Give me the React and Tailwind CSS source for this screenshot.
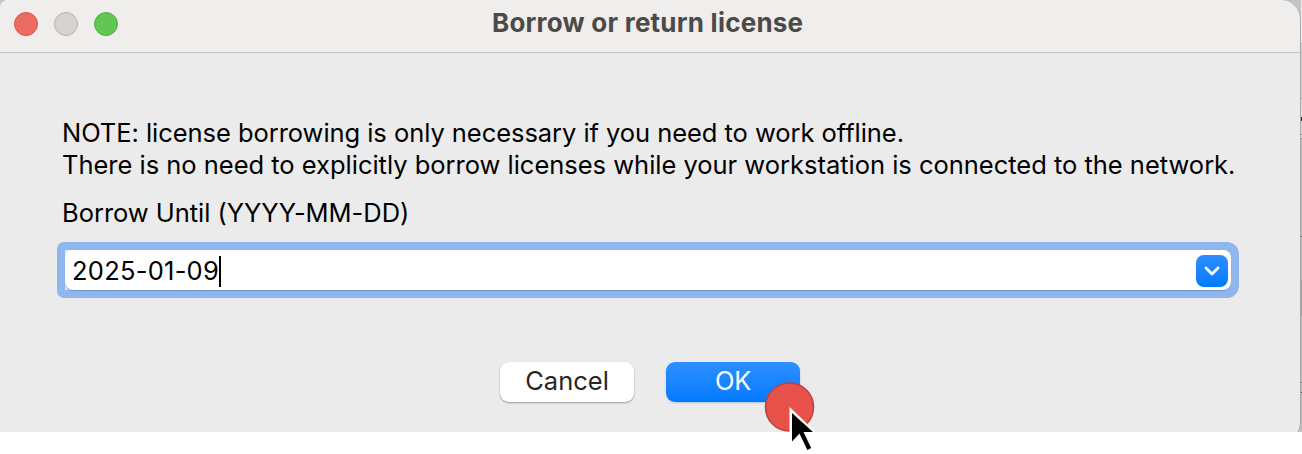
const edgeRows = [
  'h-[43px] bg-[#ececec]',
  'h-px bg-[#aaaaaa]',
  'h-[54px] bg-[#cfcfcf]',
  'h-px bg-[#aaaaaa]',
  'h-[18px] bg-[#dddddd]',
  'h-1 bg-[#222222]',
  'h-[13px] bg-[#dddddd]',
  'h-px bg-[#888888]',
  'h-[3px] bg-[#e2e2e2]',
  'h-px bg-[#888888]',
  'h-[97px] bg-[#bdbdbd]',
  'h-px bg-[#555555]',
  'h-[43px] bg-[#bdbdbd]',
  'h-[36px] bg-[#9f9f9f]',
  'h-[66px] bg-[#bdbdbd]',
  'h-px bg-[#777777]',
  'h-[9px] bg-[#bdbdbd]',
  'h-px bg-[#444444]',
  'h-[40px] bg-[#bdbdbd]',
];

function TitleBar() {
  return (
    <header className="flex h-[53px] shrink-0 items-start border-b border-[#c6c4c3] bg-[#efeeec] pl-[14px]">
      <div className="flex gap-4 pt-3">
        <span className="size-6 rounded-full border border-[#d9554b] bg-[#ed6b60]" />
        <span className="size-6 rounded-full border border-[#b5b4b2] bg-[#d5d4d2]" />
        <span className="size-6 rounded-full border border-[#4fae3f] bg-[#62c655]" />
      </div>
      <h1 className="ml-[374px] mt-[7px] whitespace-nowrap text-[26px] font-bold leading-8 tracking-[0.23px] text-[#4b4a49]">
        Borrow or return license
      </h1>
    </header>
  );
}

function DateCombo() {
  return (
    <div className="mt-[13px] ml-[57px] flex h-[56px] w-[1182px] rounded-l-[7px] rounded-r-[12px] bg-[#90b6ee] p-2">
      <div className="flex h-10 w-full rounded-r-[8px] bg-[#e9e9ef]">
        <div className="flex h-10 w-full items-center justify-between rounded-[8px] bg-white pl-[7px] pr-[3px] pt-[2px] shadow-[0_1px_1px_#6f96cf]">
          <div className="flex items-center">
            <span className="text-[25.5px] leading-8 tracking-[0.25px] text-black">2025-01-09</span>
            <span className="h-[31px] w-[2px] bg-black" />
          </div>
          <button className="flex size-8 items-center justify-center rounded-[8px] bg-linear-to-b from-[#2b8fff] to-[#007aff]">
            <svg width="16" height="10" viewBox="0 0 16 10" fill="none">
              <path d="M2 2 L8 8 L14 2" stroke="white" strokeWidth="2.8" strokeLinecap="round" strokeLinejoin="round" />
            </svg>
          </button>
        </div>
      </div>
    </div>
  );
}

export default function App() {
  return (
    <div className="relative h-[454px] w-[1302px] overflow-hidden bg-white font-['Inter','Liberation_Sans',sans-serif]">
      <div className="flex h-[432px] overflow-hidden bg-[#c4c4c4]">
        <main className="flex h-[442px] w-[1301px] shrink-0 flex-col overflow-hidden rounded-tl-[8px] rounded-tr-[20px] rounded-br-[20px] rounded-bl-[12px] border-r border-[#a8a8a8] bg-[#ebebeb]">
          <TitleBar />
          <div className="ml-[62px] mt-[64px] whitespace-nowrap text-[25.5px] leading-8 text-black">
            <p className="tracking-[-0.05px]">NOTE: license borrowing is only necessary if you need to work offline.</p>
            <p className="tracking-[-0.015px]">There is no need to explicitly borrow licenses while your workstation is connected to the network.</p>
            <p className="mt-4 tracking-[-0.03px]">Borrow Until (YYYY-MM-DD)</p>
          </div>
          <DateCombo />
          <div className="ml-[500px] mt-[64px] flex gap-8">
            <button className="h-10 w-[134px] rounded-[9px] bg-white pb-[2px] text-[25.5px] leading-8 text-[#262626] shadow-[0_1px_2px_rgba(0,0,0,0.35)]">
              Cancel
            </button>
            <button className="h-10 w-[134px] rounded-[9px] bg-linear-to-b from-[#2b8fff] to-[#007aff] pb-[2px] text-[25.5px] leading-8 tracking-[-0.2px] text-white shadow-[0_1px_2px_rgba(0,90,200,0.25)]">
              OK
            </button>
          </div>
        </main>
        <div className="w-px">
          {edgeRows.map((row, i) => (
            <div key={i} className={row} />
          ))}
        </div>
      </div>
      <svg className="absolute left-[760px] top-[378px]" width="64" height="76" viewBox="0 0 64 76">
        <circle cx="29.5" cy="29" r="24" fill="#e9524a" stroke="#b9443f" strokeWidth="1.6" />
        <path d="M29.5 29 V67 L38.5 59 L45.5 74 L53.5 70 L47 56 H58 Z" fill="white" />
        <path d="M32 35 V63.5 L39.5 55.5 L47.3 72 L51.2 70 L43.5 54 H53 Z" fill="black" />
      </svg>
    </div>
  );
}
